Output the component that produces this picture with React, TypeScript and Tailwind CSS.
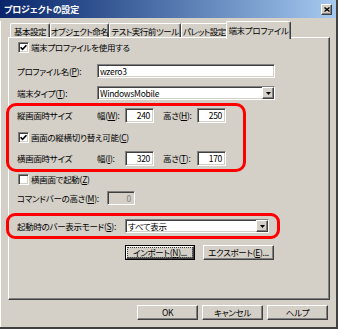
import React from "react";

const sunken =
  "border border-t-[#808080] border-l-[#808080] border-r-white border-b-white shadow-[inset_1px_1px_0_#404040,inset_-1px_-1px_0_#d4d0c8]";
const raised =
  "border border-t-white border-l-white border-r-[#404040] border-b-[#404040] shadow-[inset_-1px_-1px_0_#808080]";

function Check({ checked }: { checked: boolean }) {
  return (
    <span className={`w-[11px] h-[11px] bg-white ${sunken} flex items-center justify-center shrink-0`}>
      {checked && (
        <svg width="7" height="7" viewBox="0 0 7 7">
          <path d="M0.6 3.2 L2.6 5.3 L6.4 1.2" stroke="black" strokeWidth="1.6" fill="none" />
        </svg>
      )}
    </span>
  );
}

function Arrow() {
  return (
    <span className={`w-[12px] h-full bg-[#d4d0c8] ${raised} flex items-center justify-center shrink-0`}>
      <svg width="5" height="3" viewBox="0 0 5 3">
        <path d="M0 0 H5 L2.5 3 Z" fill="black" />
      </svg>
    </span>
  );
}

function K({ c }: { c: string }) {
  return <span className="underline">{c}</span>;
}

function Tab({ w, children }: { w: string; children: React.ReactNode }) {
  return (
    <div
      className={`${w} shrink-0 h-[14px] border-t border-l border-r border-t-white border-l-white border-r-[#404040] shadow-[inset_-1px_0_0_#808080] rounded-t-[2px] flex items-center justify-center leading-[14px] whitespace-nowrap tracking-[-0.5px]`}
    >
      {children}
    </div>
  );
}

function Btn({ w, children }: { w: string; children: React.ReactNode }) {
  return (
    <div className={`${w} shrink-0 h-[15px] bg-[#d4d0c8] ${raised} flex items-center justify-center whitespace-nowrap`}>
      {children}
    </div>
  );
}

export default function App() {
  return (
    <div className="w-[338px] h-[329px] bg-[#d4d0c8] relative overflow-hidden border-r-2 border-b-2 border-r-[#404040] border-b-[#404040] font-['Noto_Sans_CJK_JP',sans-serif] [font-feature-settings:'palt'] text-[8.5px] tracking-[-0.3px] text-black whitespace-nowrap">
      {/* title bar */}
      <div className="h-[18px] bg-gradient-to-r from-[#0a246a] to-[#a6caf0] flex items-center justify-between pl-[4px] pr-[4px]">
        <span className="text-white font-bold text-[9px] tracking-[-0.2px] leading-none">プロジェクトの設定</span>
        <span className={`w-[11px] h-[11px] bg-[#d4d0c8] ${raised} flex items-center justify-center`}>
          <svg width="6" height="5" viewBox="0 0 6 5">
            <path d="M0.5 0.5 L5.5 4.5 M5.5 0.5 L0.5 4.5" stroke="black" strokeWidth="1.4" />
          </svg>
        </span>
      </div>

      {/* body */}
      <div className="border-l border-l-white pl-[7px] pr-[6px] h-[309px]">
        {/* tabs */}
        <div className="flex items-end h-[16px] mt-[3px] pl-[2px]">
          <Tab w="w-[40px]">基本設定</Tab>
          <Tab w="w-[59px]">オブジェクト命名</Tab>
          <Tab w="w-[72px]">テスト実行前ツール</Tab>
          <Tab w="w-[47px]">パレット設定</Tab>
          <div className="relative z-10 -mx-[2px] mb-[-2px] w-[65px] shrink-0 h-[18px] bg-[#d4d0c8] border-t border-l border-r border-t-white border-l-white border-r-[#404040] shadow-[inset_-1px_0_0_#808080] rounded-t-[2px] flex items-start justify-center pt-[1px] leading-[14px] whitespace-nowrap">
            端末プロファイル
          </div>
        </div>

        {/* panel */}
        <div className="h-[263px] border border-t-white border-l-white border-r-[#404040] border-b-[#404040] shadow-[inset_-1px_-1px_0_#808080] pt-[1px] pl-[8px] flex flex-col">
          <div className="h-[16px] flex items-center pl-[1px] gap-[2px]">
            <Check checked />
            <span>端末プロファイルを使用する</span>
          </div>

          <div className="mt-[9px] h-[14px] flex items-center">
            <span className="w-[80px] shrink-0">
              プロファイル名(<K c="P" />):
            </span>
            <div className={`w-[178px] h-[14px] bg-white ${sunken} flex items-center pl-[2px]`}>wzero3</div>
          </div>

          <div className="mt-[8px] h-[14px] flex items-center">
            <span className="w-[80px] shrink-0">
              端末タイプ(<K c="T" />):
            </span>
            <div className={`w-[178px] h-[14px] bg-white ${sunken} flex items-stretch`}>
              <span className="flex-1 flex items-center pl-[2px]">WindowsMobile</span>
              <Arrow />
            </div>
          </div>

          <div className="mt-[8px] h-[15px] flex items-center">
            <span className="w-[80px] shrink-0">縦画面時サイズ</span>
            <span className="w-[28px] shrink-0">
              幅(<K c="W" />):
            </span>
            <div className={`w-[29px] shrink-0 h-[15px] bg-white ${sunken} flex items-center justify-end pr-[3px]`}>240</div>
            <span className="ml-[9px] w-[34px] shrink-0">
              高さ(<K c="H" />):
            </span>
            <div className={`w-[29px] shrink-0 h-[15px] bg-white ${sunken} flex items-center justify-end pr-[3px]`}>250</div>
          </div>

          <div className="mt-[7px] h-[14px] flex items-center pl-[1px] gap-[2px]">
            <Check checked />
            <span>
              画面の縦横切り替え可能(<K c="C" />)
            </span>
          </div>

          <div className="mt-[7px] h-[15px] flex items-center">
            <span className="w-[80px] shrink-0">横画面時サイズ</span>
            <span className="w-[28px] shrink-0">
              幅(<K c="I" />):
            </span>
            <div className={`w-[29px] shrink-0 h-[15px] bg-white ${sunken} flex items-center justify-end pr-[3px]`}>320</div>
            <span className="ml-[9px] w-[34px] shrink-0">
              高さ(<K c="T" />):
            </span>
            <div className={`w-[29px] shrink-0 h-[15px] bg-white ${sunken} flex items-center justify-end pr-[3px]`}>170</div>
          </div>

          <div className="mt-[6px] h-[14px] flex items-center pl-[1px] gap-[2px]">
            <Check checked={false} />
            <span>
              横画面で起動(<K c="Z" />)
            </span>
          </div>

          <div className="mt-[5px] h-[14px] flex items-center">
            <span className="w-[90px] shrink-0">
              コマンドバーの高さ(<K c="M" />):
            </span>
            <div className={`w-[28px] shrink-0 h-[14px] bg-[#d4d0c8] ${sunken} flex items-center justify-end pr-[3px] text-[#808080]`}>0</div>
          </div>

          <div className="mt-[14px] h-[14px] flex items-center">
            <span className="w-[108px] shrink-0">
              起動時のバー表示モード(<K c="S" />):
            </span>
            <div className={`w-[144px] shrink-0 h-[14px] bg-white ${sunken} flex items-stretch`}>
              <span className="flex-1 flex items-center pl-[2px]">すべて表示</span>
              <Arrow />
            </div>
          </div>

          <div className="mt-[12px] h-[15px] flex items-center pl-[108px] gap-[8px]">
            <div className="w-[70px] shrink-0 h-[15px] border border-black bg-[#d4d0c8]">
              <div className={`w-full h-full ${raised} flex items-center justify-center whitespace-nowrap outline outline-1 outline-dotted outline-[#404040] -outline-offset-[2px]`}>
                インポート(<K c="N" />)...
              </div>
            </div>
            <Btn w="w-[71px]">
              エクスポート(<K c="E" />)...
            </Btn>
          </div>
        </div>

        {/* dialog buttons */}
        <div className="mt-[5px] flex justify-end gap-[4px] pr-[2px]">
          <Btn w="w-[61px]">OK</Btn>
          <Btn w="w-[61px]">キャンセル</Btn>
          <Btn w="w-[61px]">ヘルプ</Btn>
        </div>
      </div>

      {/* red annotation frames */}
      <div className="absolute left-[6px] top-[103px] w-[240px] h-[69px] border-[3px] border-[#ff0000] rounded-[10px] pointer-events-none" />
      <div className="absolute left-[6px] top-[213px] w-[274px] h-[26px] border-[3px] border-[#ff0000] rounded-[9px] pointer-events-none" />
    </div>
  );
}
